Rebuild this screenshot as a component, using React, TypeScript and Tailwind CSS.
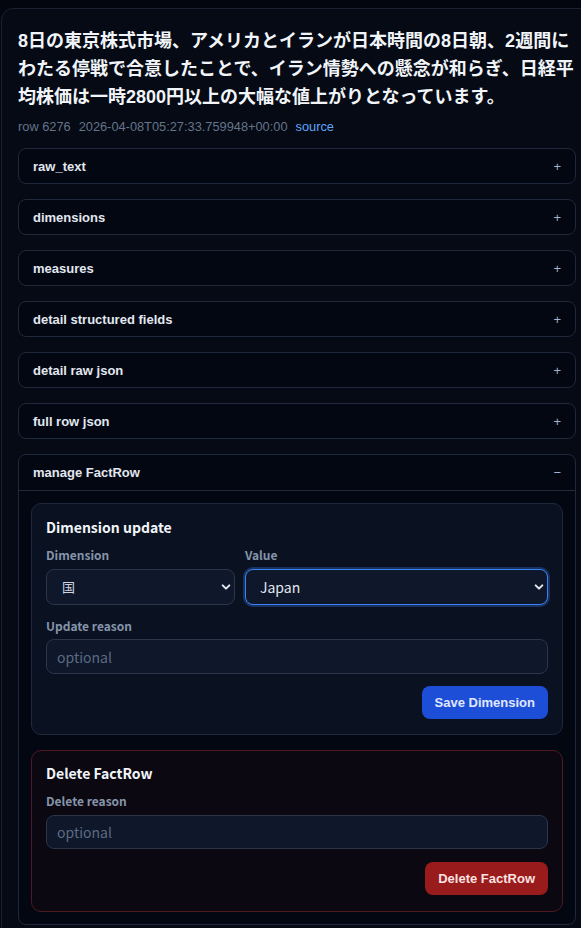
import React from "react";

const sections = [
  "raw_text",
  "dimensions",
  "measures",
  "detail structured fields",
  "detail raw json",
  "full row json",
];

const Chevron = () => (
  <svg
    className="pointer-events-none absolute right-[4px] top-1/2 -translate-y-1/2"
    width="10"
    height="10"
    viewBox="0 0 12 12"
    fill="none"
  >
    <path
      d="M2 4l4 4 4-4"
      stroke="#e5e7eb"
      strokeWidth="2.4"
      strokeLinecap="round"
      strokeLinejoin="round"
    />
  </svg>
);

const FactRowCard = () => {
  return (
    <div className="w-[581px] min-h-[928px] overflow-hidden bg-[#03060e] pl-px pt-2">
      <div className="w-[592px] rounded-xl border border-[#1a2232] bg-[#050a14] px-4 pt-[18px] pb-6">
        {/* headline */}
        <h1 className="text-lg font-bold leading-7 text-[#f1f5f9] [font-family:'Liberation_Sans','Noto_Sans_CJK_JP',sans-serif]">
          8日の東京株式市場、アメリカとイランが日本時間の8日朝、2週間にわたる停戦で合意したことで、イラン情勢への懸念が和らぎ、日経平均株価は一時2800円以上の大幅な値上がりとなっています。
        </h1>

        {/* meta */}
        <div className="mt-2 flex gap-2 text-[12.8px] leading-4 text-[#64748b] [font-family:'Liberation_Sans',sans-serif]">
          <span>row 6276</span>
          <span>2026-04-08T05:27:33.759948+00:00</span>
          <span className="text-[#60a5fa]">source</span>
        </div>

        <div className="mt-[13px] flex flex-col gap-[15px] [font-family:'Liberation_Sans',sans-serif]">
          {sections.map((name) => (
            <div
              key={name}
              className="flex h-9 items-center justify-between rounded-lg border border-[#1e293b] bg-[#030712] px-[14px] pt-px"
            >
              <span className="text-[13px] font-bold text-[#e2e8f0]">{name}</span>
              <span className="text-[13px] text-[#a5b4cc]">+</span>
            </div>
          ))}

          {/* open section */}
          <div className="rounded-lg border border-[#1e293b] bg-[#030712]">
            <div className="flex h-9 items-center justify-between border-b border-[#1e293b] px-[14px] pt-px">
              <span className="text-[13px] font-bold text-[#e2e8f0]">manage FactRow</span>
              <span className="text-[13px] text-[#a5b4cc]">−</span>
            </div>

            <div className="flex flex-col gap-[15px] p-3 [font-family:'Noto_Sans_CJK_JP',sans-serif]">
              {/* dimension update */}
              <div className="rounded-[10px] border border-[#1e293b] bg-[#0a1120] px-[14px] pt-[13px] pb-[15px]">
                <h2 className="text-sm font-bold leading-5 text-[#f1f5f9]">Dimension update</h2>
                <div className="mt-[10px] grid grid-cols-[189px_1fr] gap-x-[10px]">
                  <label className="text-xs font-bold leading-4 text-[#8594aa]">Dimension</label>
                  <label className="text-xs font-bold leading-4 text-[#8594aa]">Value</label>
                  <div className="relative mt-[6px]">
                    <div className="flex h-9 items-center rounded-lg border border-[#2b3648] bg-[#0f172a] pl-[15px] text-[13px] text-[#cbd5e1]">
                      国
                    </div>
                    <Chevron />
                  </div>
                  <div className="relative mt-[6px]">
                    <div className="flex h-9 items-center rounded-lg border border-[#3b82f6] bg-[#0f172a] pl-[14px] text-sm text-[#e2e8f0] ring-2 ring-[#3b82f6]/30">
                      Japan
                    </div>
                    <Chevron />
                  </div>
                </div>

                <label className="mt-[13px] block text-xs font-bold leading-4 text-[#8594aa]">
                  Update reason
                </label>
                <input
                  placeholder="optional"
                  className="mt-[5px] h-[35px] w-full rounded-lg border border-[#2b3648] bg-[#0f172a] pl-[10px] text-sm text-[#e2e8f0] outline-none placeholder:text-[#5b6b82]"
                />
                <div className="mt-3 flex justify-end">
                  <button className="h-[33px] rounded-lg bg-[#1d4ed8] px-[13px] text-[13px] font-bold text-[#e0e7ff] [font-family:'Liberation_Sans',sans-serif]">
                    Save Dimension
                  </button>
                </div>
              </div>

              {/* delete */}
              <div className="rounded-[10px] border border-[#4f1a22] bg-[#0b0811] px-[14px] pt-3 pb-4">
                <h2 className="text-sm font-bold leading-5 text-[#f1f5f9]">Delete FactRow</h2>
                <label className="mt-[10px] block text-xs font-bold leading-4 text-[#8594aa]">
                  Delete reason
                </label>
                <input
                  placeholder="optional"
                  className="mt-[6px] h-[34px] w-full rounded-lg border border-[#2b3648] bg-[#0f172a] pl-[10px] text-sm text-[#e2e8f0] outline-none placeholder:text-[#5b6b82]"
                />
                <div className="mt-[13px] flex justify-end">
                  <button className="h-[33px] rounded-lg bg-[#991b1b] px-[13px] text-[13px] font-bold text-[#fee2e2] [font-family:'Liberation_Sans',sans-serif]">
                    Delete FactRow
                  </button>
                </div>
              </div>
            </div>
          </div>
        </div>
      </div>
    </div>
  );
};

export default function App() {
  return <FactRowCard />;
}
